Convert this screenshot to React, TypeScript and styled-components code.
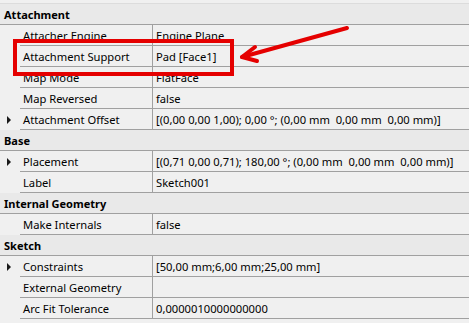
import React from 'react'
import styled, { createGlobalStyle } from 'styled-components'

const GlobalStyle = createGlobalStyle`
  html, body {
    margin: 0;
    padding: 0;
    background: #f0f0f0;
  }
  * {
    box-sizing: border-box;
  }
`

const Panel = styled.div`
  position: relative;
  width: 469px;
  height: 323px;
  padding-top: 3px;
  background: #f0f0f0;
  font-family: 'Noto Sans', 'Open Sans', sans-serif;
  font-size: 11.2px;
  color: #000000;
  overflow: hidden;
`

const Table = styled.div`
  display: flex;
  flex-direction: column;
  border-top: 1px solid #dcdcdc;
`

const GroupRow = styled.div`
  display: flex;
  align-items: center;
  height: 21px;
  padding-left: 4px;
  background: #e9e9e9;
  border-bottom: 1px solid #a0a0a0;
  font-size: 11px;
  font-weight: 700;
`

const PropRow = styled.div`
  display: flex;
  height: 21px;
`

const Indent = styled.div`
  width: 20px;
  display: flex;
  align-items: center;
  padding-left: 7px;
`

const Cells = styled.div`
  flex: 1;
  display: flex;
  border-bottom: 1px solid #a0a0a0;
`

const NameCell = styled.div`
  width: 133px;
  display: flex;
  align-items: center;
  padding-left: 3px;
  border-right: 1px solid #a0a0a0;
  white-space: nowrap;
`

const ValueCell = styled.div`
  flex: 1;
  display: flex;
  align-items: center;
  padding-left: 3px;
  white-space: pre;
`

const Expander = styled.span`
  width: 0;
  height: 0;
  border-top: 4px solid transparent;
  border-bottom: 4px solid transparent;
  border-left: 4px solid #1a1a1a;
`

const Highlight = styled.div`
  position: absolute;
  left: 13px;
  top: 39px;
  width: 221px;
  height: 37px;
  border: 4px solid #e50000;
  pointer-events: none;
`

const ArrowSvg = styled.svg`
  position: absolute;
  left: 0;
  top: 0;
  pointer-events: none;
`

type Prop = { name: string; value: string; expandable?: boolean }
type Group = { title: string; props: Prop[] }

const groups: Group[] = [
  {
    title: 'Attachment',
    props: [
      { name: 'Attacher Engine', value: 'Engine Plane' },
      { name: 'Attachment Support', value: 'Pad [Face1]' },
      { name: 'Map Mode', value: 'FlatFace' },
      { name: 'Map Reversed', value: 'false' },
      {
        name: 'Attachment Offset',
        value: '[(0,00 0,00 1,00); 0,00 °; (0,00 mm  0,00 mm  0,00 mm)]',
        expandable: true,
      },
    ],
  },
  {
    title: 'Base',
    props: [
      {
        name: 'Placement',
        value: '[(0,71 0,00 0,71); 180,00 °; (0,00 mm  0,00 mm  0,00 mm)]',
        expandable: true,
      },
      { name: 'Label', value: 'Sketch001' },
    ],
  },
  {
    title: 'Internal Geometry',
    props: [{ name: 'Make Internals', value: 'false' }],
  },
  {
    title: 'Sketch',
    props: [
      { name: 'Constraints', value: '[50,00 mm;6,00 mm;25,00 mm]', expandable: true },
      { name: 'External Geometry', value: '' },
      { name: 'Arc Fit Tolerance', value: '0,0000010000000000' },
    ],
  },
]

export default function App() {
  return (
    <Panel>
      <GlobalStyle />
      <Table>
        {groups.map((group) => (
          <React.Fragment key={group.title}>
            <GroupRow>{group.title}</GroupRow>
            {group.props.map((p) => (
              <PropRow key={p.name}>
                <Indent>{p.expandable && <Expander />}</Indent>
                <Cells>
                  <NameCell>{p.name}</NameCell>
                  <ValueCell>{p.value}</ValueCell>
                </Cells>
              </PropRow>
            ))}
          </React.Fragment>
        ))}
      </Table>
      <Highlight />
      <ArrowSvg width="469" height="323" viewBox="0 0 469 323">
        <g stroke="#e50000" strokeWidth="4" strokeLinecap="round" strokeLinejoin="round" fill="none">
          <path d="M347 28 L242 57" />
          <path d="M255 47 L242 57 L257 61" />
        </g>
      </ArrowSvg>
    </Panel>
  )
}
